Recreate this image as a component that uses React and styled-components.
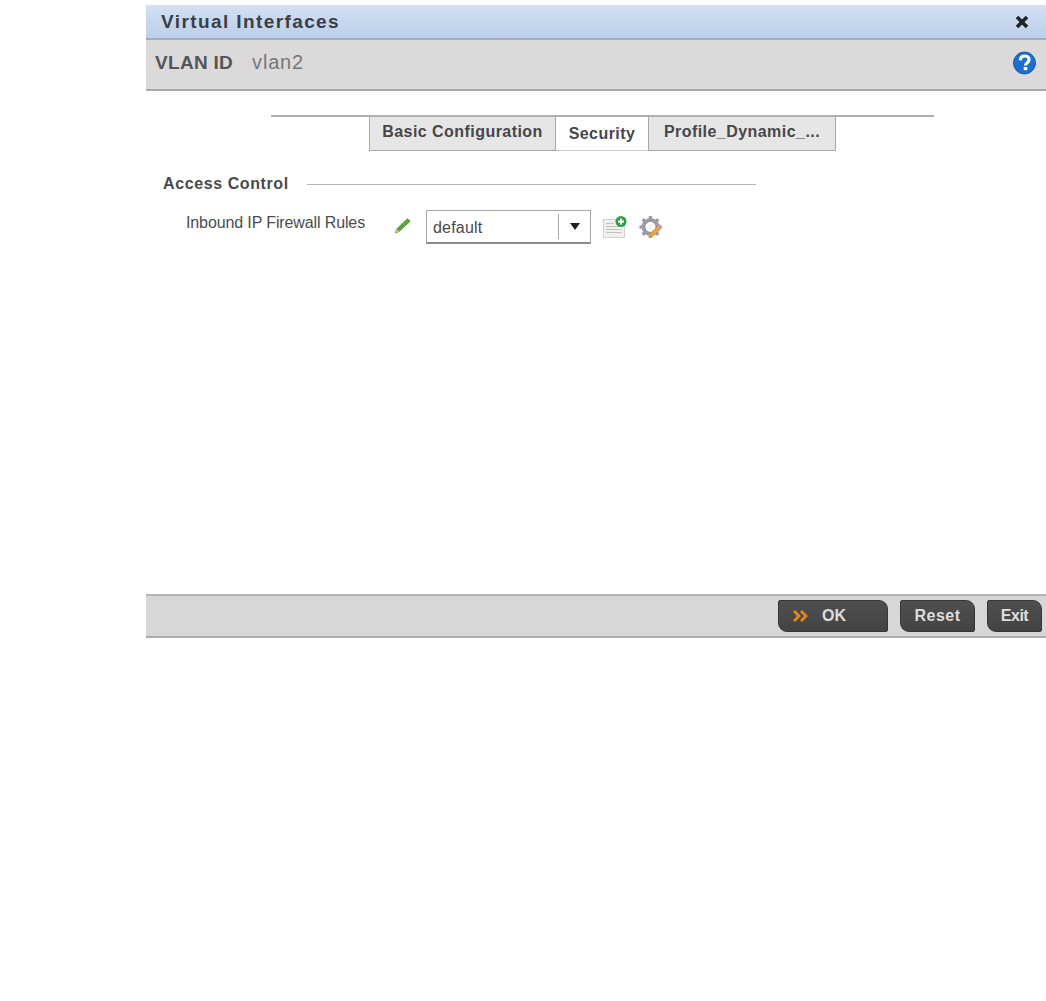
import React from "react";
import styled, { createGlobalStyle } from "styled-components";

const GlobalStyle = createGlobalStyle`
  html, body { margin: 0; padding: 0; background: #fff; }
  body { font-family: "Liberation Sans", Arial, sans-serif; }
`;

const Page = styled.div`
  width: 1046px;
  height: 1001px;
  padding: 5px 0 0 146px;
  box-sizing: border-box;
  overflow: hidden;
`;

const Panel = styled.div`
  width: 900px;
  display: flex;
  flex-direction: column;
`;

const TitleBar = styled.div`
  height: 33px;
  border-bottom: 2px solid #a3acb8;
  background: linear-gradient(#d3e0f2, #bccfe9);
  display: flex;
  align-items: center;
  justify-content: space-between;
  padding: 0 17px 0 15px;
`;

const Title = styled.div`
  font-size: 19px;
  font-weight: bold;
  letter-spacing: 1.4px;
  color: #3a3f47;
`;

const SubBar = styled.div`
  height: 45px;
  border-bottom: 2px solid #a9a9a9;
  background: #dcd9da;
  display: flex;
  align-items: center;
  justify-content: space-between;
  padding: 0 9px 4px 9px;
`;

const IdGroup = styled.div`
  display: flex;
  align-items: baseline;
  gap: 19px;
`;

const IdLabel = styled.span`
  font-size: 19px;
  font-weight: bold;
  letter-spacing: 0.3px;
  color: #55555a;
`;

const IdValue = styled.span`
  font-size: 20px;
  letter-spacing: 0.8px;
  color: #77777b;
`;

const Content = styled.div`
  height: 503px;
  padding-top: 24px;
  box-sizing: border-box;
`;

const TabRow = styled.div`
  width: 663px;
  margin-left: 125px;
  border-top: 2px solid #b0b0b0;
  display: flex;
  padding-left: 98px;
  box-sizing: border-box;
`;

const Tab = styled.div`
  height: 34px;
  box-sizing: border-box;
  width: ${(p) => p.$width}px;
  background: ${(p) => (p.$active ? "#fff" : "#e6e6e6")};
  border: 1px solid #a8a8a8;
  border-top: 0;
  border-left-width: ${(p) => (p.$first ? 1 : 0)}px;
  border-bottom-color: ${(p) => (p.$active ? "#c8c8c8" : "#a8a8a8")};
  display: flex;
  justify-content: center;
  align-items: ${(p) => (p.$active ? "center" : "flex-start")};
  padding-top: ${(p) => (p.$active ? 1 : 6)}px;
  font-size: 16px;
  font-weight: bold;
  letter-spacing: 0.45px;
  color: #47474a;
  white-space: nowrap;
`;

const Section = styled.div`
  margin: 24px 0 0 17px;
  display: flex;
  align-items: center;
  width: 593px;
  gap: 18px;
`;

const SectionTitle = styled.div`
  font-size: 16px;
  font-weight: bold;
  letter-spacing: 0.6px;
  color: #4a4a4d;
  white-space: nowrap;
`;

const SectionRule = styled.div`
  flex: 1;
  height: 1px;
  background: #b4b4b4;
`;

const FieldRow = styled.div`
  margin: 17px 0 0 40px;
  display: flex;
  align-items: center;
`;

const FieldLabel = styled.div`
  width: 208px;
  font-size: 16px;
  letter-spacing: -0.12px;
  color: #4c4c4f;
  padding-bottom: 8px;
  white-space: nowrap;
`;

const PencilWrap = styled.div`
  width: 32px;
  height: 18px;
`;

const Select = styled.div`
  width: 165px;
  height: 34px;
  box-sizing: border-box;
  border: 1px solid #a6a6a6;
  border-bottom: 2px solid #8a8a8a;
  background: #fff;
  display: flex;
  align-items: center;
  font-size: 16px;
  letter-spacing: 0.2px;
  color: #4a4a4a;
`;

const SelectText = styled.div`
  flex: 1;
  padding: 2px 0 0 6px;
`;

const SelectArrow = styled.div`
  width: 31px;
  height: 25px;
  border-left: 1px solid #a8a8a8;
  display: flex;
  align-items: center;
  justify-content: center;
  &::after {
    content: "";
    border-left: 5.5px solid transparent;
    border-right: 5.5px solid transparent;
    border-top: 7px solid #222;
  }
`;

const IconRow = styled.div`
  display: flex;
  align-items: center;
  gap: 12px;
  margin: 0 0 1px 12px;
`;

const Footer = styled.div`
  height: 40px;
  border-top: 2px solid #b5b5b5;
  border-bottom: 2px solid #ababab;
  background: #d7d7d7;
  display: flex;
  align-items: center;
  justify-content: flex-end;
  gap: 12px;
  padding-right: 4px;
`;

const Button = styled.div`
  width: ${(p) => p.$width}px;
  height: 32px;
  box-sizing: border-box;
  border: 1px solid #363636;
  border-radius: 2px 9px 2px 9px;
  background: linear-gradient(#4f4f4f, #434343);
  color: #dedede;
  font-size: 16px;
  font-weight: bold;
  letter-spacing: ${(p) => p.$spacing || 0}px;
  display: flex;
  align-items: center;
  justify-content: ${(p) => (p.$icon ? "flex-start" : "center")};
  padding-left: ${(p) => (p.$icon ? 14 : 0)}px;
  gap: 13px;
`;

const CloseIcon = () => (
  <svg width="14" height="14" viewBox="0 0 14 14">
    <path d="M2 2 L12 12 M12 2 L2 12" stroke="#1f2226" strokeWidth="3.6" />
  </svg>
);

const HelpIcon = () => (
  <svg width="25" height="24" viewBox="0 0 24 24">
    <circle cx="12" cy="12" r="11" fill="#1b6fd0" stroke="#1a5aa8" />
    <path d="M7.8 9.4 C8 6.2 10 5 12.2 5 C14.8 5 16.6 6.6 16.6 8.8 C16.6 11.6 13 11.8 13 14.4" fill="none" stroke="#fff" strokeWidth="3.2" />
    <rect x="11.2" y="16" width="3.6" height="3.2" fill="#fff" />
  </svg>
);

const PencilIcon = () => (
  <svg width="17" height="16" viewBox="0 0 17 16">
    <path d="M13.5 0.8 L16.2 3.2 L5.2 13.4 L1.2 15.2 L2.6 11 Z" fill="#5fa53a" stroke="#3f7d25" strokeWidth="0.7" />
    <path d="M2.6 11 L5.2 13.4 L1.2 15.2 Z" fill="#e3c08f" />
  </svg>
);

const AddListIcon = () => (
  <svg width="24" height="22" viewBox="0 0 24 22">
    <rect x="0.5" y="3.5" width="21" height="18" fill="#f0f0ec" stroke="#d2d2cd" />
    <path d="M3 7.5 H11 M3 10.5 H18 M3 13.5 H18 M3 16.5 H18" stroke="#c2c2bc" strokeWidth="1.2" />
    <circle cx="18" cy="5.5" r="5.5" fill="#2f9c46" />
    <path d="M18 2.5 V8.5 M15 5.5 H21" stroke="#fff" strokeWidth="2" />
  </svg>
);

const GearEditIcon = () => (
  <svg width="24" height="24" viewBox="0 0 24 24">
    <circle cx="11.5" cy="12" r="7" fill="none" stroke="#9a9da3" strokeWidth="4" />
    <path d="M11.5 1 V5 M11.5 19 V23 M0.5 12 H4.5 M18.5 12 H22.5 M3.7 4.2 L6.5 7 M16.5 17 L19.3 19.8 M19.3 4.2 L16.5 7 M3.7 19.8 L6.5 17" stroke="#9a9da3" strokeWidth="3.4" />
    <circle cx="11.5" cy="12" r="3" fill="#f4f4f4" />
    <path d="M20 9.5 L23 12.5 L13.5 21.5 L10 22.5 L11 19 Z" fill="#e9a63a" stroke="#c9822a" strokeWidth="0.6" />
    <path d="M20 9.5 L23 12.5 L21.5 14 L18.5 11 Z" fill="#d98fc0" />
  </svg>
);

const ChevronsIcon = () => (
  <svg width="16" height="12" viewBox="0 0 16 12">
    <path d="M1 1 L6 6 L1 11 M8 1 L13 6 L8 11" fill="none" stroke="#e08a1e" strokeWidth="2.8" />
  </svg>
);

export default function App() {
  return (
    <Page>
      <GlobalStyle />
      <Panel>
        <TitleBar>
          <Title>Virtual Interfaces</Title>
          <CloseIcon />
        </TitleBar>
        <SubBar>
          <IdGroup>
            <IdLabel>VLAN ID</IdLabel>
            <IdValue>vlan2</IdValue>
          </IdGroup>
          <HelpIcon />
        </SubBar>
        <Content>
          <TabRow>
            <Tab $first $width={187}>Basic Configuration</Tab>
            <Tab $active $width={93}>Security</Tab>
            <Tab $width={187}>Profile_Dynamic_...</Tab>
          </TabRow>
          <Section>
            <SectionTitle>Access Control</SectionTitle>
            <SectionRule />
          </Section>
          <FieldRow>
            <FieldLabel>Inbound IP Firewall Rules</FieldLabel>
            <PencilWrap><PencilIcon /></PencilWrap>
            <Select>
              <SelectText>default</SelectText>
              <SelectArrow />
            </Select>
            <IconRow>
              <AddListIcon />
              <GearEditIcon />
            </IconRow>
          </FieldRow>
        </Content>
        <Footer>
          <Button $icon $width={110}>
            <ChevronsIcon />
            OK
          </Button>
          <Button $width={75} $spacing={0.5}>Reset</Button>
          <Button $width={55} $spacing={-0.5}>Exit</Button>
        </Footer>
      </Panel>
    </Page>
  );
}
